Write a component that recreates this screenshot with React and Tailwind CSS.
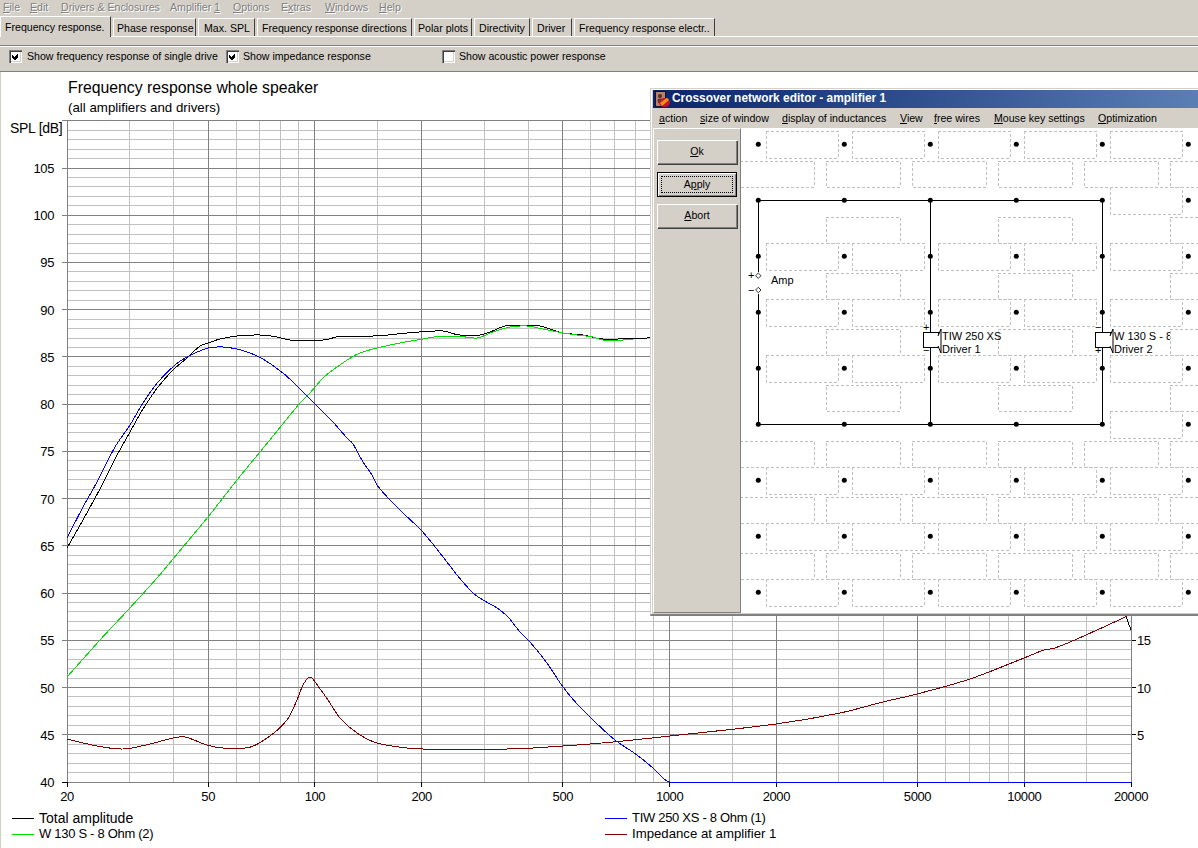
import React from "react";

const X = (f) => 67 + 354.67 * Math.log10(f / 20);
const Y = (db) => 782 - (db - 40) * 9.446;

const majorF = [20, 50, 100, 200, 500, 1000, 2000, 5000, 10000, 20000];
const minorF = [30, 40, 60, 70, 80, 90, 150, 300, 400, 600, 700, 800, 900, 1500, 3000, 4000, 6000, 7000, 8000, 9000, 15000];

const total = [[67,548],[83,520],[102,485],[115,459],[130,432],[143,409],[158,387],[173,370],[187,358],[200,346],[208,343],[220,339],[237,336],[260,335],[277,337],[290,340],[313,340],[323,340],[342,336],[373,336],[407,333],[443,331],[460,335],[480,335],[490,332],[510,325],[533,325],[563,333],[583,335],[603,339],[650,338],[900,340],[1100,520],[1122,600],[1127,619],[1131,630]];
const blue = [[67,538],[83,507],[97,482],[115,447],[130,425],[143,403],[158,382],[175,365],[187,357],[208,348],[223,347],[237,349],[250,353],[263,359],[283,373],[298,387],[315,404],[332,421],[347,438],[353,444],[363,462],[372,475],[377,485],[390,500],[403,513],[421,530],[432,543],[447,562],[457,575],[473,593],[483,600],[497,608],[508,617],[520,632],[530,642],[547,663],[563,687],[578,705],[593,720],[615,740],[637,755],[653,768],[670,782],[1131,782]];
const green = [[67,677],[100,640],[128,610],[157,578],[183,547],[208,517],[237,480],[260,452],[282,425],[300,403],[310,393],[323,378],[337,367],[352,357],[360,353],[377,348],[400,343],[423,339],[443,336],[457,336],[477,338],[493,332],[510,327],[527,326],[543,329],[563,333],[577,335],[593,337],[603,340],[623,340],[633,339]];
const imp = [[67,739],[97,746],[123,749],[150,744],[173,738],[185,737],[207,745],[223,748],[245,748],[267,738],[287,720],[297,700],[303,685],[310,677],[318,686],[328,700],[340,718],[357,733],[377,743],[407,748],[423,749],[507,749],[563,746],[613,742],[670,736],[776,724],[840,713],[883,702],[917,694],[970,679],[1024,658],[1044,650],[1055,648],[1086,635],[1125,617],[1131,613]];

// x-monotone cubic through the read-off points
function smooth(p) {
  const slope = (i) => {
    const a = p[Math.max(i - 1, 0)], c = p[Math.min(i + 1, p.length - 1)];
    return (c[1] - a[1]) / (c[0] - a[0]);
  };
  let d = `M${p[0][0]} ${p[0][1]}`;
  for (let i = 0; i < p.length - 1; i++) {
    const b = p[i], c = p[i + 1];
    if (b[1] === c[1]) {
      d += ` L${c[0]} ${c[1]}`;
      continue;
    }
    const h = (c[0] - b[0]) / 3;
    const s0 = i > 0 && p[i - 1][1] === b[1] ? 0 : slope(i);
    const s1 = i + 2 < p.length && p[i + 2][1] === c[1] ? 0 : slope(i + 1);
    d += ` C${(b[0] + h).toFixed(1)} ${(b[1] + s0 * h).toFixed(1)} ${(c[0] - h).toFixed(1)} ${(c[1] - s1 * h).toFixed(1)} ${c[0]} ${c[1]}`;
  }
  return d;
}

function Chart() {
  const dbs = [];
  for (let d = 40; d <= 110; d++) dbs.push(d);
  return (
    <svg className="block" width="1198" height="693" viewBox="0 115 1198 693">
      <g shapeRendering="crispEdges" strokeWidth="1">
        {dbs.filter((d) => d % 5 !== 0).map((d) => (
          <line key={d} x1="67" x2="1131" y1={Y(d)} y2={Y(d)} stroke="#c0c0c0" />
        ))}
        {minorF.map((f) => (
          <line key={f} x1={X(f)} x2={X(f)} y1="121" y2="782" stroke="#c0c0c0" />
        ))}
        {dbs.filter((d) => d % 5 === 0).map((d) => (
          <line key={d} x1="62" x2="1131" y1={Y(d)} y2={Y(d)} stroke="#808080" />
        ))}
        {majorF.map((f) => (
          <line key={f} x1={X(f)} x2={X(f)} y1="121" y2="782" stroke="#808080" />
        ))}
        {majorF.map((f) => (
          <line key={f} x1={X(f)} x2={X(f)} y1="782" y2="787" stroke="#000" />
        ))}
        <line x1="62" x2="67" y1="782" y2="782" stroke="#000" />
        {[5, 10, 15].map((v) => (
          <line key={v} x1="1131" x2="1136" y1={782 - v * 9.446} y2={782 - v * 9.446} stroke="#000" />
        ))}
        <line x1="1131" x2="1131" y1="121" y2="782" stroke="#808080" />
        <path d={smooth(total)} fill="none" stroke="#000" />
        <path d={smooth(green)} fill="none" stroke="#00e000" />
        <path d={smooth(blue)} fill="none" stroke="#0000ff" />
        <path d={smooth(imp)} fill="none" stroke="#800000" />
      </g>
      <text x="10" y="133" className="text-[14px] tracking-[-0.3px]">SPL [dB]</text>
      <g className="text-[13px] tracking-[-0.4px]" fill="#000">
        {[40, 45, 50, 55, 60, 65, 70, 75, 80, 85, 90, 95, 100, 105].map((d) => (
          <text key={d} x="54" y={Y(d) + 5} textAnchor="end">{d}</text>
        ))}
        {[[5, "5"], [10, "10"], [15, "15"]].map(([v, t]) => (
          <text key={v} x="1137" y={782 - v * 9.446 + 5}>{t}</text>
        ))}
        {majorF.map((f) => (
          <text key={f} x={X(f)} y="801" textAnchor="middle">{f}</text>
        ))}
      </g>
    </svg>
  );
}

function Check({ checked }) {
  return (
    <span className="w-[13px] h-[13px] shrink-0 bg-white shadow-[inset_1px_1px_0_#808080,inset_2px_2px_0_#404040,inset_-1px_-1px_0_#ffffff,inset_-2px_-2px_0_#d4d0c8] flex items-center justify-center">
      {checked && (
        <svg width="9" height="9" viewBox="0 0 9 9" shapeRendering="crispEdges">
          <path d="M1 3h1v1h1v1h1V4h1V3h1V2h1v1h0v2H7v1H6v1H5v1H4V8H3V7H2V6H1z" fill="#000" />
        </svg>
      )}
    </span>
  );
}

function Tab({ label, w, active, pl = "pl-[4px]" }) {
  return active ? (
    <div className={`${w} ${pl} h-[21px] -mb-px relative bg-[#d4d0c8] border-t border-l border-white border-r border-r-[#404040] leading-[20px] whitespace-nowrap`}>{label}</div>
  ) : (
    <div className={`${w} ${pl} h-[18px] ml-[2px] border-t border-l border-white border-r border-r-[#404040] leading-[19px] whitespace-nowrap`}>{label}</div>
  );
}

function M({ w, children }) {
  return <span className={`${w} shrink-0 whitespace-nowrap`}>{children}</span>;
}

function Btn({ children, h = "h-[24px]", focus }) {
  return (
    <div className={`w-[80px] ${h} flex items-center justify-center bg-[#d4d0c8] ${focus ? "border border-black shadow-[inset_1px_1px_0_#fff,inset_-1px_-1px_0_#808080]" : "shadow-[inset_1px_1px_0_#fff,inset_-1px_-1px_0_#808080,1px_1px_0_#404040]"}`}>
      {focus ? (
        <span className="w-[72px] h-[17px] border border-dotted border-black flex items-center justify-center">{children}</span>
      ) : children}
    </div>
  );
}

function Driver({ x, top, bottom, l1, l2, clipW }) {
  const by = 332;
  return (
    <g>
      <rect x={x - 7} y={by} width="15" height="15" fill="#fff" stroke="#000" shapeRendering="crispEdges" />
      <path d={`M${x + 8} ${by + 4} L${x + 11} ${by - 3} V${by + 21} L${x + 8} ${by + 14}`} fill="#fff" stroke="#000" />
      <text x={x - 7} y="331" className="text-[11px]">{top}</text>
      <text x={x - 7} y="354" className="text-[11px]">{bottom}</text>
      <svg x={x + 11} y="325" width={clipW} height="32">
        <text x="1" y="15" className="text-[11px]">{l1}</text>
        <text x="1" y="28" className="text-[11px]">{l2}</text>
      </svg>
    </g>
  );
}

function Circuit() {
  const nx = [758, 844, 930, 1016, 1102, 1188];
  const ny = [144, 200, 256, 312, 368, 424, 480, 536, 592];
  const hx = [766, 852, 938, 1024, 1110];
  const rects = [];
  ny.forEach((y) => {
    hx.forEach((x) => {
      if ((y === 200 || y === 424) && x !== 1110) return;
      rects.push([x, y - 13, 72, 27]);
    });
  });
  const vy = [161, 217, 273, 329, 385, 441, 497, 553];
  vy.forEach((y) => {
    [740, 826, 912, 998, 1084, 1170].forEach((x) => {
      if (y >= 217 && y <= 385 && (x === 740 || x === 912 || x === 1084)) return;
      rects.push([x, y, 74, 26]);
    });
  });
  return (
    <svg className="block" width="457" height="485" viewBox="741 128 457 485">
      <g fill="none" stroke="#c0c0c0" strokeDasharray="3 2" shapeRendering="crispEdges">
        {rects.map(([x, y, w, h]) => (
          <rect key={`${x}-${y}`} x={x} y={y} width={w} height={h} />
        ))}
      </g>
      <g stroke="#000" fill="none" shapeRendering="crispEdges">
        <path d="M758 272V200H1102V424H758V294" />
        <path d="M930 200V424" />
      </g>
      {nx.flatMap((x) => ny.map((y) => <circle key={`${x}.${y}`} cx={x + 0.3} cy={y + 0.3} r="2.5" fill="#000" />))}
      <path d="M758.3 273l2.7 2.7l-2.7 2.7l-2.7-2.7z M758.3 287.3l2.7 2.7l-2.7 2.7l-2.7-2.7z" fill="#fff" stroke="#000" strokeWidth="0.8" />
      <text x="748" y="279" className="text-[11px]">+</text>
      <text x="748" y="294" className="text-[11px]">−</text>
      <text x="771" y="284" className="text-[11px]">Amp</text>
      <Driver x={930} top="+" bottom="−" l1="TIW 250 XS" l2="Driver 1" clipW={60} />
      <Driver x={1102} top="−" bottom="+" l1="W 130 S - 8" l2="Driver 2" clipW={57} />
    </svg>
  );
}

export default function App() {
  return (
    <div className="relative w-[1198px] h-[848px] overflow-hidden flex flex-col bg-[#d4d0c8] text-black text-[10.6px] font-['Liberation_Sans',sans-serif]">
      <div className="h-[15px] flex items-center pl-[3px] text-[#808080] [text-shadow:1px_1px_0_#fff] leading-none">
        <M w="w-[27px]"><u>F</u>ile</M>
        <M w="w-[31px]"><u>E</u>dit</M>
        <M w="w-[109px]"><u>D</u>rivers &amp; Enclosures</M>
        <M w="w-[63px]">Amplifier <u>1</u></M>
        <M w="w-[48px]"><u>O</u>ptions</M>
        <M w="w-[44px]">E<u>x</u>tras</M>
        <M w="w-[54px]"><u>W</u>indows</M>
        <M w="w-[30px]"><u>H</u>elp</M>
      </div>

      <div className="h-[22px] flex items-end border-b border-white">
        <Tab active label="Frequency response." w="w-[111px]" />
        <Tab label="Phase response" w="w-[83px]" pl="pl-[3px]" />
        <Tab label="Max. SPL" w="w-[57px]" pl="pl-[5px]" />
        <Tab label="Frequency response directions" w="w-[155px]" />
        <Tab label="Polar plots" w="w-[58px]" pl="pl-[3px]" />
        <Tab label="Directivity" w="w-[56px]" />
        <Tab label="Driver" w="w-[40px]" />
        <Tab label="Frequency response electr.." w="w-[141px]" />
      </div>

      <div className="h-[8px]" />

      <div className="h-[27px] pb-[3px] border-t border-t-[#808080] border-b border-b-[#808080] shadow-[inset_0_1px_0_#fff] flex items-center">
        <div className="flex items-center ml-[9px] w-[217px]"><Check checked /><span className="ml-[5px] whitespace-nowrap">Show frequency response of single drive</span></div>
        <div className="flex items-center w-[216px]"><Check checked /><span className="ml-[4px] whitespace-nowrap">Show impedance response</span></div>
        <div className="flex items-center"><Check /><span className="ml-[4px] whitespace-nowrap">Show acoustic power response</span></div>
      </div>

      <div className="flex-1 bg-white shadow-[inset_1px_0_0_#d4d0c8] flex flex-col">
        <div className="h-[43px] pl-[68px] pt-[7px]">
          <div className="text-[15.8px] leading-[18px]">Frequency response whole speaker</div>
          <div className="text-[13.3px] leading-[17px] mt-[2px]">(all amplifiers and drivers)</div>
        </div>
        <Chart />
        <div className="grid grid-cols-[593px_1fr] leading-[16px] pl-[12px] pt-[2px]">
          {[
            ["#000000", "Total amplitude", "text-[14px]"],
            ["#0000ff", "TIW 250 XS - 8 Ohm (1)", "text-[13px] tracking-[-0.3px]"],
            ["#00e000", "W 130 S - 8 Ohm (2)", "text-[13px] tracking-[-0.3px]"],
            ["#800000", "Impedance at amplifier 1", "text-[13.2px]"],
          ].map(([c, t, cl]) => (
            <div key={t} className="flex items-center h-[16px] whitespace-nowrap">
              <svg className="block w-[22px] h-[2px] mr-[5px] shrink-0" viewBox="0 0 22 2" shapeRendering="crispEdges"><line x1="0" x2="22" y1="1" y2="1" stroke={c} /></svg>
              <span className={cl}>{t}</span>
            </div>
          ))}
        </div>
      </div>

      {/* floating child window */}
      <div className="absolute left-[650px] top-[88px] w-[548px] h-[528px] bg-[#d4d0c8] border-t border-l border-[#d4d0c8] border-b-2 border-b-[#808080] shadow-[inset_1px_1px_0_#fff] pl-[2px] pt-px flex flex-col">
        <div className="h-[18px] shrink-0 flex items-center pl-[2px] bg-gradient-to-r from-[#0a246a] to-[#5a7fb5]">
          <svg width="15" height="17" viewBox="0 0 15 17" className="shrink-0">
            <rect x="0.5" y="0.5" width="10" height="15" fill="#b88468" stroke="#10103a" />
            <circle cx="5" cy="5" r="2" fill="#503028" />
            <circle cx="5" cy="10" r="2.4" fill="#503028" />
            <ellipse cx="9.5" cy="11.5" rx="5.5" ry="4.6" fill="#c01828" />
            <path d="M5 12 L12 6.8 L14 9 L7 15z" fill="#f09018" />
          </svg>
          <span className="ml-[2px] text-white font-bold text-[11.9px] whitespace-nowrap">Crossover network editor - amplifier 1</span>
        </div>
        <div className="h-[20px] shrink-0 flex items-center pl-[6px] leading-none">
          <M w="w-[41px]"><u>a</u>ction</M>
          <M w="w-[82px]"><u>s</u>ize of window</M>
          <M w="w-[118px]"><u>d</u>isplay of inductances</M>
          <M w="w-[34px]"><u>V</u>iew</M>
          <M w="w-[60px]"><u>f</u>ree wires</M>
          <M w="w-[104px]"><u>M</u>ouse key settings</M>
          <M w="w-[70px]"><u>O</u>ptimization</M>
        </div>
        <div className="flex-1 flex min-h-0">
          <div className="w-[88px] h-[485px] shrink-0 border-t border-l border-white border-r border-r-[#808080] border-b border-b-[#808080] pl-[3px] pt-[11px] flex flex-col">
            <Btn><span><u>O</u>k</span></Btn>
            <div className="h-[8px]" />
            <Btn h="h-[25px]" focus><span>A<u>p</u>ply</span></Btn>
            <div className="h-[7px]" />
            <Btn><span><u>A</u>bort</span></Btn>
          </div>
          <div className="bg-white h-[485px]"><Circuit /></div>
        </div>
      </div>
    </div>
  );
}
